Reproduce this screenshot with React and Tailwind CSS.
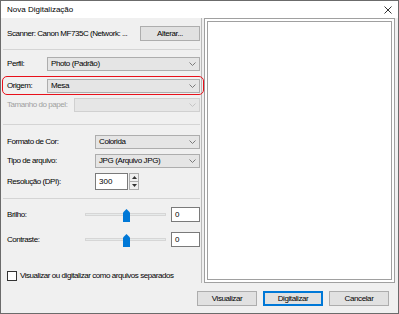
import React from 'react'

const font = { fontFamily: '"Liberation Sans", Arial, sans-serif' }

/* ── small drawings ── */
function Chevron({ muted }) {
  return (
    <svg width="7" height="4" viewBox="0 0 7 4" className="shrink-0">
      <path d="M0.5 0.5 L3.5 3.5 L6.5 0.5" fill="none" stroke={muted ? '#c4c4c4' : '#7a7a7a'} strokeWidth="1" />
    </svg>
  )
}

function Select({ value, className = '', disabled }) {
  return (
    <div
      className={`h-[14px] flex items-center justify-between pl-[3px] pr-[3px] border ${
        disabled ? 'border-[#d0d0d0] bg-[#e6e6e6]' : 'border-[#adadad] bg-[#e5e5e5]'
      } ${className}`}
    >
      <span className="text-[8px] leading-none tracking-[-0.4px] whitespace-nowrap text-black">{value}</span>
      <Chevron muted={disabled} />
    </div>
  )
}

function Thumb() {
  return (
    <svg width="7" height="13" viewBox="0 0 7 13" className="absolute -top-[5px] left-[37px]">
      <path d="M0 3.5 L3.5 0 L7 3.5 V13 H0 Z" fill="#0078d7" />
    </svg>
  )
}

function SliderRow({ label }) {
  return (
    <div className="flex items-center h-[15px]">
      <Label className="w-[78px]">{label}</Label>
      <div className="relative w-[81px] h-[3px] bg-[#e7eaea] border border-[#d6d6d6]">
        <Thumb />
      </div>
      <div className="ml-auto w-[29px] h-[15px] bg-white border border-[#7a7a7a] flex items-center pl-[3px] text-[8px] leading-none">
        0
      </div>
    </div>
  )
}

function Label({ children, className = '' }) {
  return <span className={`text-[8px] leading-none tracking-[-0.45px] whitespace-nowrap ${className}`}>{children}</span>
}

function Button({ children, primary }) {
  return (
    <div
      className={`w-[60px] h-[15px] flex items-center justify-center bg-[#e1e1e1] text-[8px] leading-none tracking-[-0.4px] ${
        primary ? 'border-2 border-[#0078d7]' : 'border border-[#adadad]'
      }`}
    >
      {children}
    </div>
  )
}

export default function App() {
  return (
    <div style={font} className="w-[399px] h-[314px] border border-[#6b6b6b] bg-[#f0f0f0] flex flex-col text-black overflow-hidden">
      {/* Title bar */}
      <div className="h-[17px] bg-white flex items-center justify-between pl-[6px] pr-[6px] shrink-0">
        <span className="text-[8px] leading-none">Nova Digitalização</span>
        <svg width="8" height="8" viewBox="0 0 8 8">
          <path d="M0.5 0.5 L7.5 7.5 M7.5 0.5 L0.5 7.5" stroke="#333" strokeWidth="1" />
        </svg>
      </div>

      {/* Body */}
      <div className="flex h-[265px] shrink-0">
        {/* Left settings panel */}
        <div className="w-[201px] border-r border-[#b9b9b9] flex flex-col pl-[6px] pr-[1px]">
          {/* Scanner */}
          <div className="mt-[8px] flex items-center h-[15px]">
            <Label>Scanner: Canon MF735C (Network: ...</Label>
            <div className="ml-auto w-[60px] h-[15px] flex items-center justify-center bg-[#e1e1e1] border border-[#adadad] text-[8px] leading-none tracking-[-0.4px]">
              Alterar...
            </div>
          </div>
          <div className="mt-[8px] -ml-[4px] h-px bg-[#d4d4d4]" />

          {/* Perfil */}
          <div className="mt-[7px] flex items-center">
            <Label className="w-[40px]">Perfil:</Label>
            <Select value="Photo (Padrão)" className="flex-1" />
          </div>

          {/* Origem (highlighted) */}
          <div className="relative mt-[8px] flex items-center">
            <div className="absolute -left-[5px] -right-[4px] -top-[3px] -bottom-[2px] border-[1.5px] border-[#e8101a] rounded-[5px]" />
            <Label className="w-[40px]">Origem:</Label>
            <Select value="Mesa" className="flex-1" />
          </div>

          {/* Tamanho do papel */}
          <div className="mt-[5px] flex items-center">
            <Label className="w-[67px] text-[#a0a0a0]">Tamanho do papel:</Label>
            <Select value="" disabled className="flex-1" />
          </div>
          <div className="mt-[12px] -ml-[4px] h-px bg-[#d4d4d4]" />

          {/* Formato de Cor */}
          <div className="mt-[10px] flex items-center">
            <Label className="w-[88px]">Formato de Cor:</Label>
            <Select value="Colorida" className="flex-1" />
          </div>

          {/* Tipo de arquivo */}
          <div className="mt-[5px] flex items-center">
            <Label className="w-[88px]">Tipo de arquivo:</Label>
            <Select value="JPG (Arquivo JPG)" className="flex-1" />
          </div>

          {/* Resolução */}
          <div className="mt-[5px] flex items-center h-[17px]">
            <Label className="w-[88px]">Resolução (DPI):</Label>
            <div className="w-[33px] h-[17px] bg-white border border-[#7a7a7a] flex items-center pl-[3px] text-[8px] leading-none">
              300
            </div>
            <div className="ml-[1px] w-[10px] h-[17px] border border-[#adadad] bg-[#f0f0f0] flex flex-col">
              <div className="flex-1 flex items-center justify-center border-b border-[#adadad]">
                <svg width="5" height="3" viewBox="0 0 5 3"><path d="M0 3 L2.5 0 L5 3 Z" fill="#333" /></svg>
              </div>
              <div className="flex-1 flex items-center justify-center">
                <svg width="5" height="3" viewBox="0 0 5 3"><path d="M0 0 L2.5 3 L5 0 Z" fill="#333" /></svg>
              </div>
            </div>
          </div>
          <div className="mt-[8px] -ml-[4px] h-px bg-[#d4d4d4]" />

          {/* Sliders */}
          <div className="mt-[8px]">
            <SliderRow label="Brilho:" />
          </div>
          <div className="mt-[10px]">
            <SliderRow label="Contraste:" />
          </div>

          {/* Checkbox */}
          <div className="mt-[24px] flex items-center gap-[3px]">
            <div className="w-[10px] h-[10px] bg-white border border-[#333]" />
            <Label>Visualizar ou digitalizar como arquivos separados</Label>
          </div>
        </div>

        {/* Preview */}
        <div className="ml-[2px] mr-[3px] flex-1 border border-[#a0a0a0] bg-white p-[2px]">
          <div className="w-full h-full border border-[#a0a0a0] bg-white" />
        </div>
      </div>

      {/* Buttons */}
      <div className="mt-[8px] flex justify-end gap-[6px] pr-[9px]">
        <Button>Visualizar</Button>
        <Button primary>Digitalizar</Button>
        <Button>Cancelar</Button>
      </div>
    </div>
  )
}
